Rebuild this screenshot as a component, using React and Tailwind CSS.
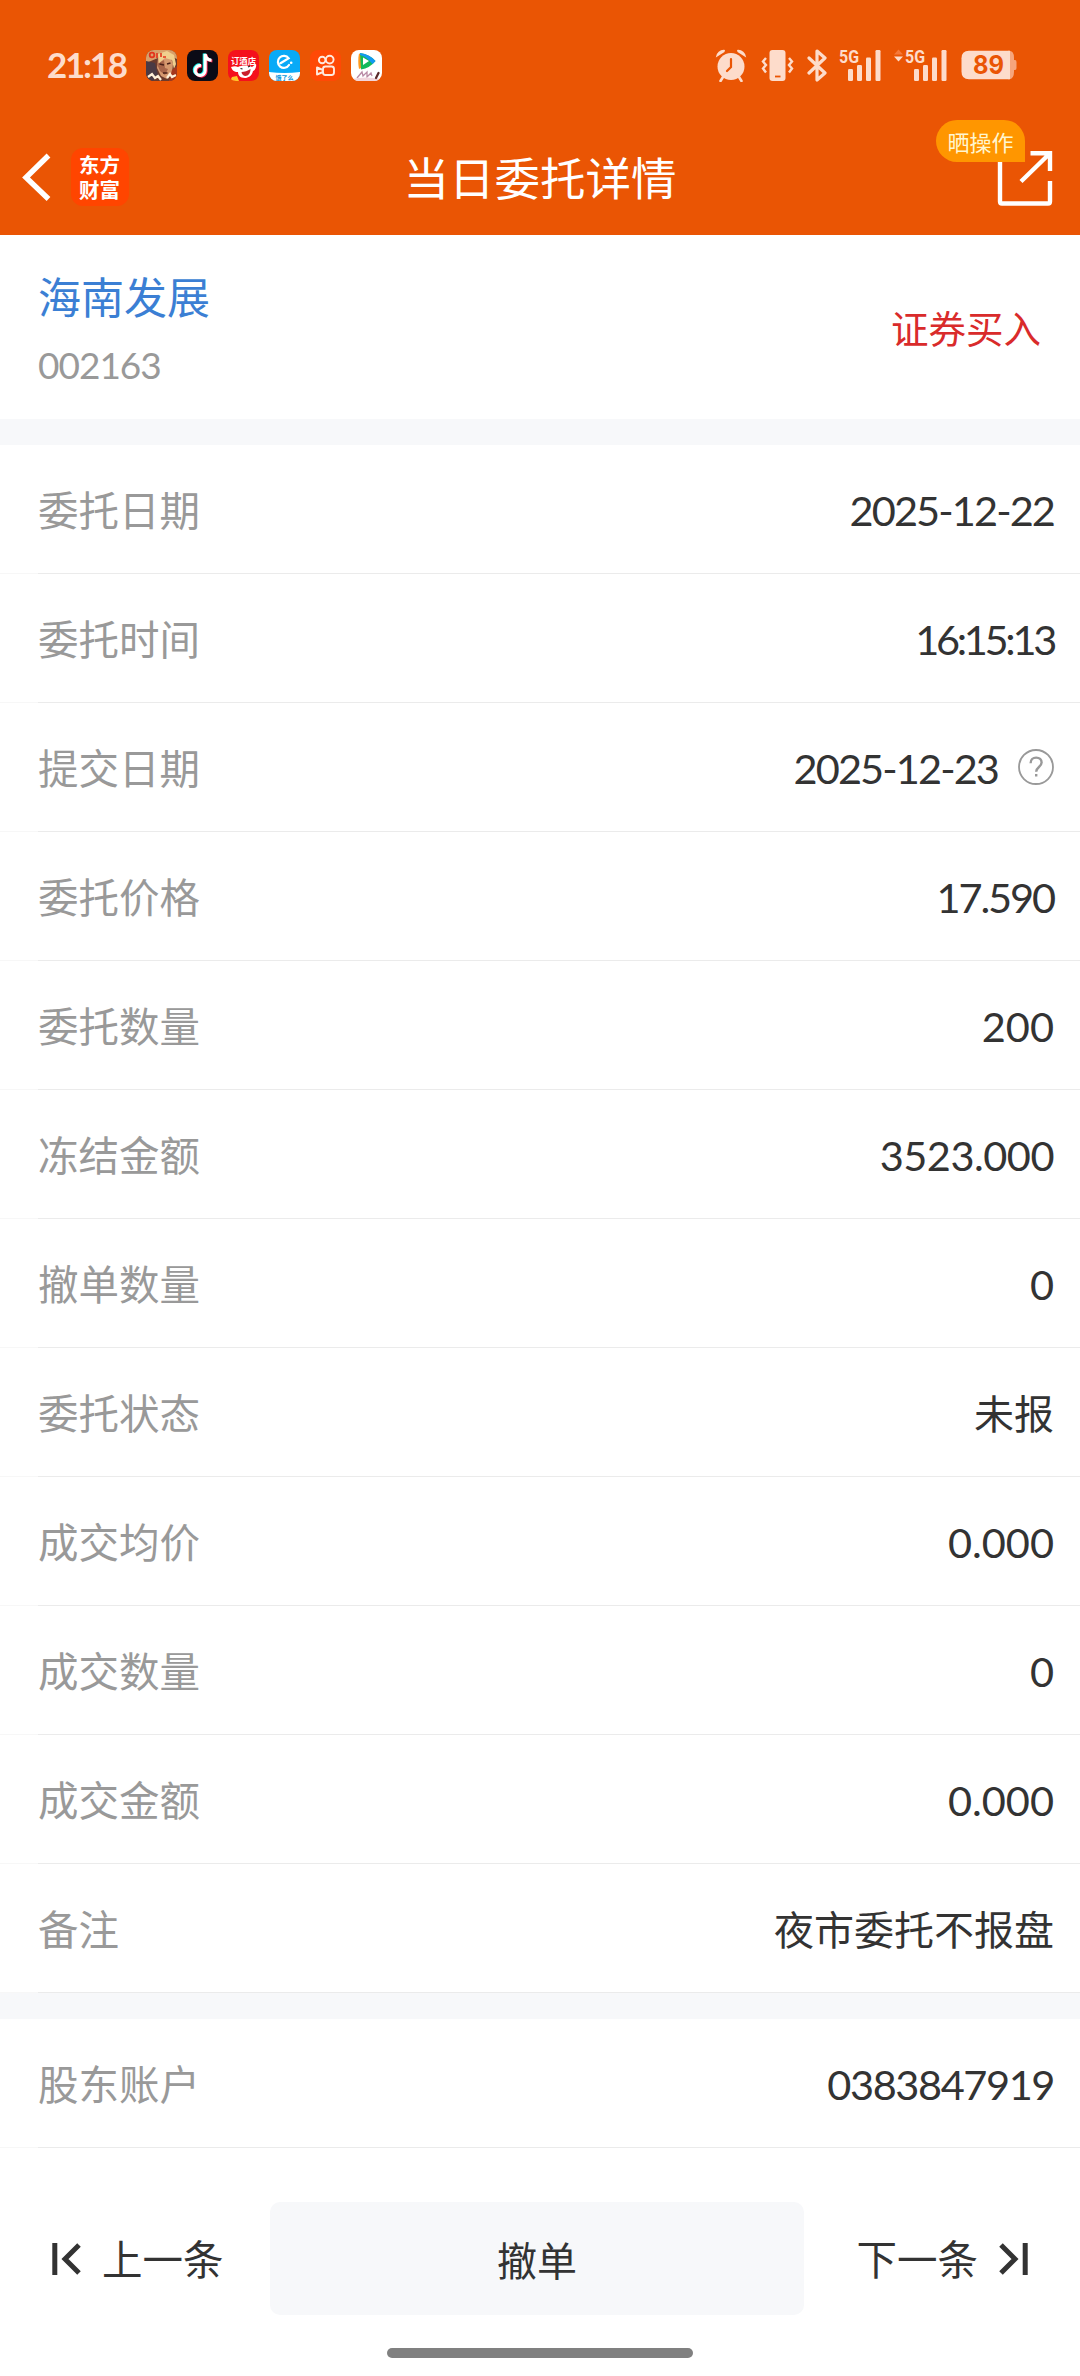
import { clsx } from "clsx";

// Order fields shown in the main list
const details = [
  { label: "委托日期", value: "2025-12-22", tracking: "tracking-[-1.9px]" },
  { label: "委托时间", value: "16:15:13", tracking: "tracking-[-3.3px]" },
  { label: "提交日期", value: "2025-12-23", tracking: "tracking-[-1.9px]", help: true },
  { label: "委托价格", value: "17.590", tracking: "tracking-[-2.1px]" },
  { label: "委托数量", value: "200", tracking: "tracking-[0px]" },
  { label: "冻结金额", value: "3523.000", tracking: "tracking-[-0.5px]" },
  { label: "撤单数量", value: "0", tracking: "tracking-[0px]" },
  { label: "委托状态", value: "未报", cjk: true },
  { label: "成交均价", value: "0.000", tracking: "tracking-[0px]" },
  { label: "成交数量", value: "0", tracking: "tracking-[0px]" },
  { label: "成交金额", value: "0.000", tracking: "tracking-[0px]" },
  { label: "备注", value: "夜市委托不报盘", cjk: true },
];

const account = { label: "股东账户", value: "0383847919", tracking: "tracking-[-1.4px]" };

const AppIcons = () => (
  <div className="flex gap-[10px]">
    {/* Game portrait */}
    <svg className="h-[31px] w-[31px] rounded-[8px]" viewBox="0 0 31 31">
      <rect width="31" height="31" fill="#6b3a2c" />
      <path d="M0 0h31v9l-9-4-10 3-12 5z" fill="#d9a06a" />
      <path d="M0 11l9 2 3 12-5 6H0z" fill="#4a3a44" />
      <path d="M12 8l6-4 7 4 2 6-1 9-5 6-6-3-4-8z" fill="#d6996f" />
      <path d="M18 10l1 8 3 1-3 6-5-4-3-7z" fill="#a8654a" />
      <path d="M12 4l9-3 7 4 2 9-2 5-2-9-7-2-6 5z" fill="#f0cf8e" />
      <path d="M13.500 14l4.500 1M21 14l3.500-1M17 23h4.500" stroke="#4b2018" strokeWidth="1.500" />
      <path d="M26 20l5-4v15h-8z" fill="#a4371d" />
      <circle cx="6" cy="5" r="2.300" fill="none" stroke="#e3341c" strokeWidth="1.800" />
      <path d="M11 3v5M15 3v4M17 7h3" stroke="#e3341c" strokeWidth="1.600" />
      <path d="M2 27l4-3 3 4 3-2 3 4M21 28l3-4 2 3 4-2" fill="none" stroke="#fff0d8" strokeWidth="2.200" />
    </svg>
    {/* Music note */}
    <svg className="h-[31px] w-[31px] rounded-[8px]" viewBox="0 0 31 31">
      <rect width="31" height="31" fill="#0b0b16" />
      <g fill="none" strokeWidth="3">
        <path d="M14 15.500a5 5 0 1 0 4.200 5V4c.4 3.500 2.500 6 6.300 6.300" stroke="#25f4ee" transform="translate(-1 -.6)" />
        <path d="M14 15.500a5 5 0 1 0 4.200 5V4c.4 3.500 2.500 6 6.300 6.300" stroke="#fe2c55" transform="translate(.9 .7)" />
        <path d="M14 15.500a5 5 0 1 0 4.200 5V4c.4 3.500 2.500 6 6.300 6.300" stroke="#fff" />
      </g>
    </svg>
    {/* Shopping dog */}
    <svg className="h-[31px] w-[31px] rounded-[8px]" viewBox="0 0 31 31">
      <rect width="31" height="31" fill="#f5101c" />
      <text x="15.500" y="13.500" fontSize="8.300" fontWeight="700" fill="#fff" textAnchor="middle" fontFamily="Noto Sans CJK SC">订酒店</text>
      <path d="M10 17c4-2 10-2 14 0 2-1 3-3 4-3 1 4-2 7-3 7-1 5-5 7-8 7-5 0-7-3-7-6-4 0-6-2-7-5 3-1 5-1 7 0z" fill="#fff" />
      <path d="M13.500 22c3 0 6-1 9-3 0 4-2 7-5 7-2 0-4-2-4-4z" fill="#c9202d" />
      <path d="M12.500 18.500l2 .5M20 17l2-1" stroke="#222" strokeWidth="1.200" />
      <path d="M2 31l2-4 5-1 2 5z" fill="#ffc529" />
    </svg>
    {/* Food delivery */}
    <svg className="h-[31px] w-[31px] rounded-[8px]" viewBox="0 0 31 31">
      <rect width="31" height="31" fill="#09aaf7" />
      <path d="M0 22q15.500 2 31 0v9H0z" fill="#fff" />
      <path d="M11.500 13.200l8.200-4.900A6 6 0 1 0 20 15" fill="none" stroke="#fff" strokeWidth="2.200" strokeLinecap="round" />
      <circle cx="22.200" cy="12.700" r="1.300" fill="#fff" />
      <text x="15.500" y="29.600" fontSize="6" fontWeight="700" fill="#0797dc" textAnchor="middle" fontFamily="Noto Sans CJK SC">饿了么</text>
    </svg>
    {/* Video camera */}
    <svg className="h-[31px] w-[31px] rounded-[8px]" viewBox="0 0 31 31">
      <rect width="31" height="31" fill="#ff4906" />
      <g fill="none" stroke="#ffe9df" strokeWidth="1.900">
        <circle cx="12.200" cy="10" r="3.300" />
        <circle cx="19.700" cy="9.600" r="3.900" />
        <rect x="13" y="16.500" width="11" height="8.500" rx="2.500" />
        <path d="M13 20l-6-2.500v7l6-2.500" strokeLinejoin="round" />
      </g>
    </svg>
    {/* Video play */}
    <svg className="h-[31px] w-[31px] rounded-[8px]" viewBox="0 0 31 31">
      <rect width="31" height="31" fill="#fff" />
      <path d="M8 3.500q-1.500 7 0 15.500l4-2V5z" fill="#ff9a1f" />
      <path d="M9 3q10 1.500 15.500 8Q19 18 10 19.500z" fill="#12b95a" />
      <path d="M9 3q10 1.500 15.500 8l-3 3Q15 6 9 5z" fill="#1298f3" />
      <path d="M12 7.500l6 3.500-6 4z" fill="#fff" />
      <path d="M6 28l5-6 1 4 4-4 0 5 4-4 1 3" fill="none" stroke="#b98aa5" strokeWidth="1.300" />
      <path d="M0 29q15-3 31 0v2H0z" fill="#f1d5dc" />
      <path d="M25 28l2.500-5" stroke="#5a2a2a" strokeWidth="2.200" strokeLinecap="round" />
    </svg>
  </div>
);

const Signal = ({ data }) => (
  <svg className={data ? "h-[33px] w-[53px]" : "h-[33px] w-[42px]"} viewBox={data ? "-11 0 53 33" : "0 0 42 33"} fill="#fddccb">
    {data && <path d="M-11 5.500l4.500-5 4.500 5z" fill="#f5793a" />}
    {data && <path d="M-11 7.500h9l-4.500 5z" />}
    <text x="0" y="14" fontSize="18" fontWeight="700" fontFamily="Roboto" textLength="20" lengthAdjust="spacingAndGlyphs">5G</text>
    <rect x="9" y="20" width="5" height="12" rx="1.200" />
    <rect x="18" y="16" width="5" height="16" rx="1.200" />
    <rect x="27" y="8.500" width="5" height="23.500" rx="1.200" />
    <rect x="36.500" y="1" width="5" height="31" rx="1.200" />
  </svg>
);

const StatusBar = () => (
  <div className="flex h-[130px] items-center justify-between pr-[63px] pl-[47px]">
    <div className="flex items-center">
      <span className="w-[99px] pb-px font-[Lato] text-[35px] leading-none font-bold tracking-[-2.300px] text-[#fddccb]">21:18</span>
      <AppIcons />
    </div>
    <div className="flex items-center text-[#fddccb]">
      {/* Alarm */}
      <svg className="mr-[14px] h-[33px] w-[32px]" viewBox="0 0 32 33" fill="currentColor">
        <circle cx="16" cy="17.500" r="13.500" />
        <path d="M.8 8.500A8 8 0 0 1 10 .9L9.500 3zM31.200 8.500A8 8 0 0 0 22 .9l.5 2.100z" />
        <path d="M8 28l-2.500 4M24 28l2.500 4" stroke="currentColor" strokeWidth="2.600" strokeLinecap="round" />
        <path d="M16 10v8l-4 4" fill="none" stroke="#ea5504" strokeWidth="2.200" strokeLinecap="round" />
      </svg>
      {/* Vibrate */}
      <svg className="mr-[13px] h-[33px] w-[33px]" viewBox="0 0 33 33" fill="currentColor">
        <rect x="8.500" y="1" width="16" height="31" rx="3" />
        <path d="M14 27.500h5.500" stroke="#ea5504" strokeWidth="1.800" />
        <path d="M5 9l-3 3.500L5 16l-3 3.500L5 23.500M28 9l3 3.500L28 16l3 3.500L28 23.500" fill="none" stroke="currentColor" strokeWidth="2.400" />
      </svg>
      {/* Bluetooth */}
      <svg className="mr-[12px] h-[33px] w-[20px]" viewBox="0 0 20 33" fill="none" stroke="currentColor" strokeWidth="3.200" strokeLinejoin="round" strokeLinecap="round">
        <path d="M2 9l16 15-8 7V2l8 7L2 24" />
      </svg>
      <div className="mr-[13px] flex">
        <Signal />
      </div>
      <div className="mr-[14px] flex">
        <Signal data />
      </div>
      {/* Battery */}
      <svg className="h-[30px] w-[56px]" viewBox="0 0 56 30">
        <path d="M47 .8h1q5 0 5 7v14q0 7.400-5 7.400h-1zM53 10h1q1.500 0 1.500 2v6q0 2-1.500 2h-1z" fill="#f6a57d" />
        <path d="M8 .8h41v28.400H8q-7.500 0-7.500-7.500V8.300Q.5.800 8 .8z" fill="#fddccb" />
        <text x="27.500" y="24.300" fontSize="26" fontWeight="700" fill="#ea5504" textAnchor="middle" fontFamily="Inter" textLength="31" lengthAdjust="spacingAndGlyphs">89</text>
      </svg>
    </div>
  </div>
);

const NavBar = () => (
  <div className="relative flex h-[105px] items-center justify-between px-[22px]">
    <div className="flex items-center gap-[20px] pb-[11px]">
      <svg className="h-[48px] w-[29px]" viewBox="0 0 29 48" fill="none" stroke="#fff" strokeWidth="5.400">
        <path d="M26.500 2.500L4 24.500l22.500 21.500" />
      </svg>
      <div className="flex h-[58px] w-[58px] items-center justify-center rounded-[12px] bg-[#ff4500]">
        <span className="w-[42px] text-[20.500px] leading-[25px] font-bold break-all text-white">东方财富</span>
      </div>
    </div>
    <h1 className="absolute inset-x-0 top-[13px] text-center text-[45.500px] leading-[66px] text-white">当日委托详情</h1>
    <svg className="mr-[5px] mb-[10px] h-[56px] w-[56px]" viewBox="0 0 56 56" fill="none" stroke="#fff" strokeWidth="4.400">
      <path d="M3 10v41.500q0 2 2 2h46q2 0 2-2V31" />
      <path d="M33.500 3.200H53V21M53 3.200L24 31.500" />
    </svg>
    <span className="absolute top-[-10px] left-[936px] flex h-[42px] w-[89px] items-center justify-center rounded-[21px] rounded-br-none bg-[#ff9600] text-[22px] text-[#fff6cf]">
      晒操作
    </span>
  </div>
);

const DetailRow = ({ label, value, tracking, help, cjk }) => (
  <div className="flex h-[129px] border-b border-[#f7f7f7] pl-[38px]">
    <div className="-mb-px flex flex-1 items-center justify-between border-b border-[#ebebeb] pr-[26px]">
      <span className="text-[40.500px] leading-none text-[#999]">{label}</span>
      <span className="flex items-center text-[#333]">
        <span className={clsx("leading-none", cjk ? "text-[40px]" : "pt-[3px] font-[Lato] text-[41.500px]", tracking)}>{value}</span>
        {help && (
          <svg className="ml-[20px] h-[36px] w-[36px]" viewBox="0 0 36 36" fill="none" stroke="#999" strokeWidth="1.800">
            <circle cx="18" cy="18" r="17" />
            <path d="M12.600 14.200c0-3.400 2.300-5.600 5.600-5.600s5.400 2 5.400 4.900c0 4.500-5.400 4.500-5.400 9.300M18.200 25v2.600" strokeWidth="2.400" />
          </svg>
        )}
      </span>
    </div>
  </div>
);

const Footer = () => (
  <footer className="flex flex-1 flex-col text-[40px] leading-none text-[#333]">
    <div className="mt-[54px] flex h-[113px] items-center">
      <button className="flex h-full w-[270px] items-center pl-[51px] text-[40.500px]">
        <svg className="mr-[20px] h-[32px] w-[31px]" viewBox="0 0 31 32" fill="none" stroke="#333" strokeWidth="5">
          <path d="M3.800 0v32M28 2L14 16l14 14" />
        </svg>
        上一条
      </button>
      <button className="h-full w-[534px] rounded-[10px] bg-[#f7f8fa]">撤单</button>
      <button className="flex h-full flex-1 items-center justify-end pr-[51px] text-[40.500px]">
        下一条
        <svg className="ml-[20px] h-[32px] w-[31px]" viewBox="0 0 31 32" fill="none" stroke="#333" strokeWidth="5">
          <path d="M27.200 0v32M3 2l14 14L3 30" />
        </svg>
      </button>
    </div>
    <div className="mx-auto mt-[33px] h-[10px] w-[306px] rounded-full bg-[#808080]" />
  </footer>
);

const App = () => {
  return (
    <div className="flex h-[2376px] w-[1080px] flex-col overflow-hidden bg-white font-['Noto_Sans_CJK_SC',sans-serif]">
      <header className="h-[235px] shrink-0 bg-[#ea5504]">
        <StatusBar />
        <NavBar />
      </header>

      {/* Stock name and side */}
      <section className="flex h-[184px] shrink-0 items-center justify-between pr-[39px] pl-[38px]">
        <div className="flex flex-col gap-[29px] pt-[2px]">
          <span className="text-[43px] leading-none text-[#3b7fd4]">海南发展</span>
          <span className="font-[Lato] text-[37px] leading-none tracking-[-1px] text-[#999]">002163</span>
        </div>
        <span className="text-[37.500px] leading-none text-[#d92b2b]">证券买入</span>
      </section>

      <div className="h-[26px] shrink-0 bg-[#f7f8fa]" />
      <section className="shrink-0">
        {details.map((item) => (
          <DetailRow key={item.label} {...item} />
        ))}
      </section>
      <div className="h-[26px] shrink-0 bg-[#f7f8fa]" />
      <section className="shrink-0">
        <DetailRow {...account} />
      </section>

      <Footer />
    </div>
  );
};

export default App;
